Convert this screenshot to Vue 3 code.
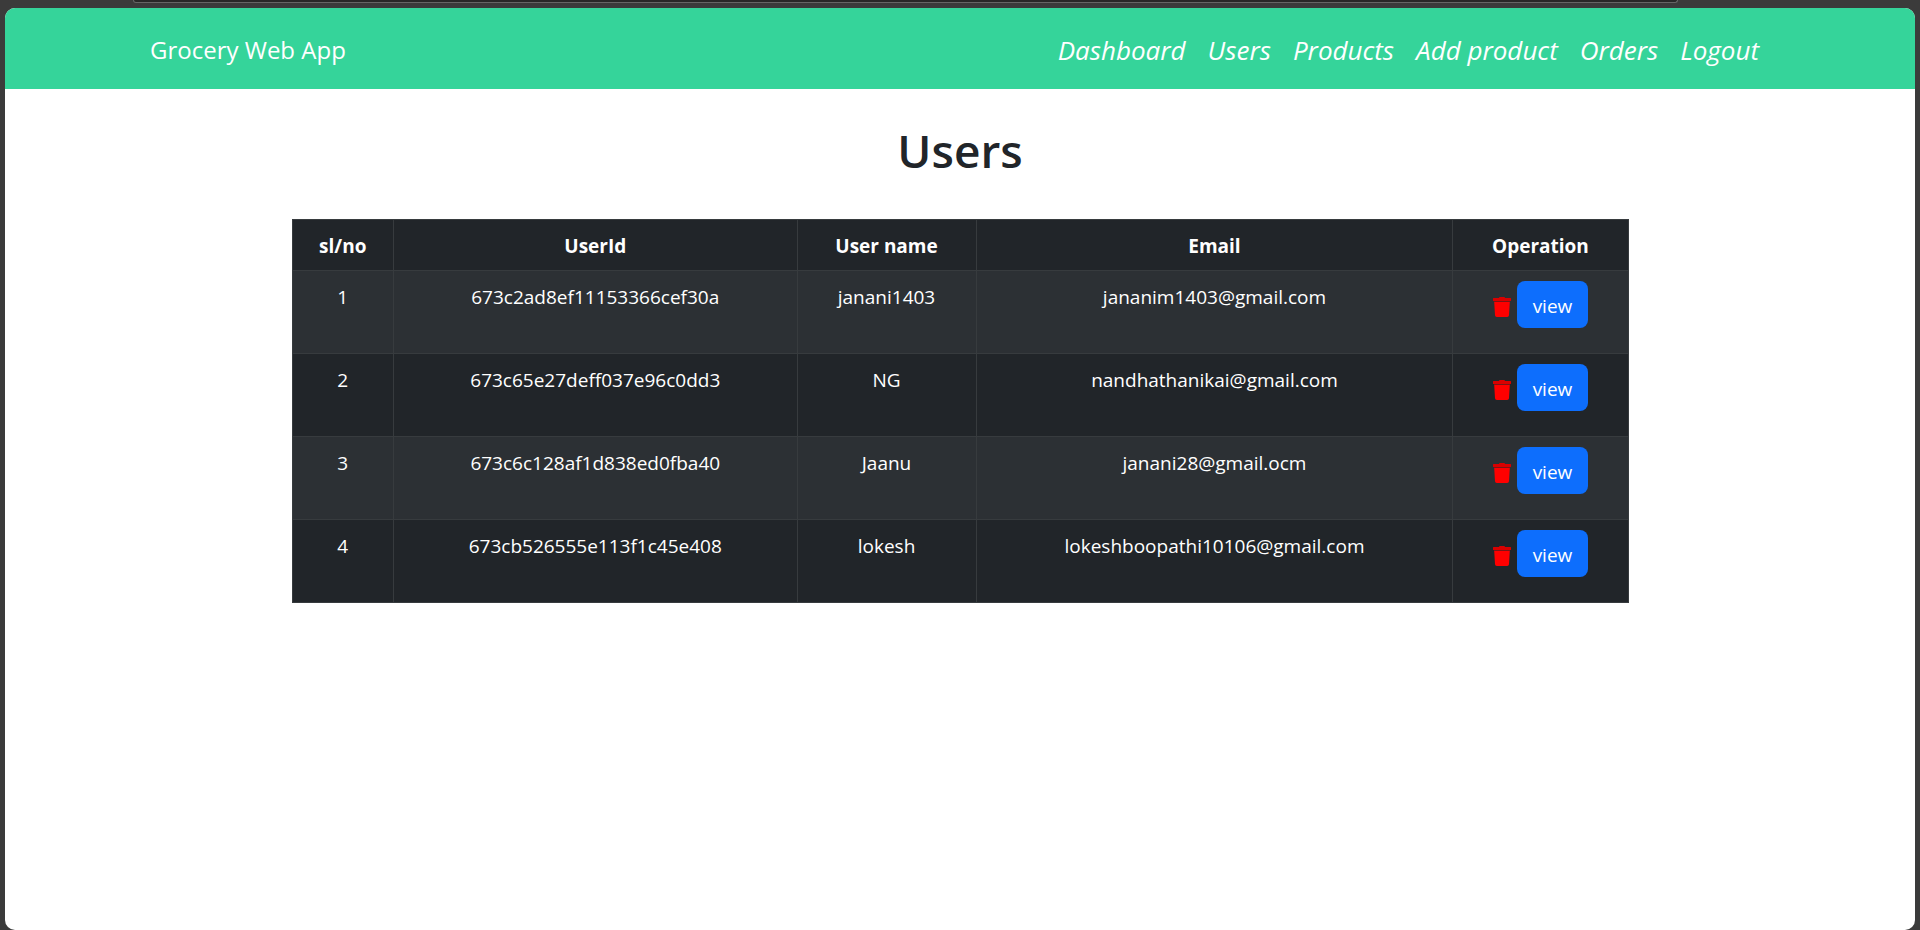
<script setup>
const links = ['Dashboard', 'Users', 'Products', 'Add product', 'Orders', 'Logout']
const columns = ['sl/no', 'UserId', 'User name', 'Email', 'Operation']
const users = [
  { id: '673c2ad8ef11153366cef30a', name: 'janani1403', email: 'jananim1403@gmail.com' },
  { id: '673c65e27deff037e96c0dd3', name: 'NG', email: 'nandhathanikai@gmail.com' },
  { id: '673c6c128af1d838ed0fba40', name: 'Jaanu', email: 'janani28@gmail.ocm' },
  { id: '673cb526555e113f1c45e408', name: 'lokesh', email: 'lokeshboopathi10106@gmail.com' }
]
</script>

<template>
  <div class="window">
    <div class="toolbar"><div class="address"></div></div>
    <div class="page">
      <header class="navbar">
        <div class="container">
          <a class="brand" href="#">Grocery Web App</a>
          <nav class="nav">
            <a v-for="link in links" :key="link" class="nav-link" href="#">{{ link }}</a>
          </nav>
        </div>
      </header>
      <main>
        <h1>Users</h1>
        <table>
          <colgroup>
            <col class="c-no" />
            <col class="c-id" />
            <col class="c-name" />
            <col class="c-email" />
            <col class="c-op" />
          </colgroup>
          <thead>
            <tr>
              <th v-for="c in columns" :key="c" scope="col">{{ c }}</th>
            </tr>
          </thead>
          <tbody>
            <tr v-for="(u, i) in users" :key="u.id">
              <td>{{ i + 1 }}</td>
              <td>{{ u.id }}</td>
              <td>{{ u.name }}</td>
              <td>{{ u.email }}</td>
              <td>
                <div class="ops">
                  <button class="trash" type="button" :aria-label="'Delete ' + u.name">
                    <svg viewBox="0 0 18 20" width="18" height="20" aria-hidden="true">
                      <path fill="#d90000" d="M6.500 0h5l.5 1h5.500a.5.500 0 0 1 .5.500V3.500a.5.500 0 0 1-.5.500H.5A.5.500 0 0 1 0 3.500V1.500A.5.500 0 0 1 .5 1H6z" />
                      <path fill="#f00" d="M1.200 5h15.600l-.8 13.200a1.900 1.900 0 0 1-1.900 1.800H3.900A1.900 1.900 0 0 1 2 18.200z" />
                      <path fill="#7a1416" d="M1 4h16v1H1z" />
                    </svg>
                  </button>
                  <button class="view" type="button">view</button>
                </div>
              </td>
            </tr>
          </tbody>
        </table>
      </main>
    </div>
  </div>
</template>

<style>
body {
  background: #3b3b3b;
}
</style>

<style scoped>
* {
  box-sizing: border-box;
}
.window {
  min-height: 100vh;
  display: flex;
  flex-direction: column;
  padding: 0 5px;
  background: #3b3b3b;
  color: #212529;
  font-family: "Segoe UI", "Open Sans", "Noto Sans", sans-serif;
  font-size: 19px;
  line-height: 32px;
}
.toolbar {
  height: 8px;
  padding: 0 12.4% 0 6.7%;
}
.address {
  height: 3px;
  border: 1px solid #666;
  border-top: 0;
  border-radius: 0 0 12px 12px;
  background: #282828;
}
.page {
  flex: 1;
  border-radius: 10px;
  overflow: hidden;
  background: #fff;
}
.navbar {
  background: #35d49a;
}
.container {
  max-width: 1650px;
  min-height: 81px;
  margin: 0 auto;
  padding: 12px 15px 10px;
  display: flex;
  align-items: center;
  justify-content: space-between;
}
.brand {
  color: #fff;
  font-size: 24px;
  line-height: 38px;
  text-decoration: none;
}
.nav {
  display: flex;
}
.nav-link {
  padding: 9px 11px;
  color: #fff;
  font-size: 26px;
  font-style: italic;
  line-height: 40px;
  text-decoration: none;
}
h1 {
  margin: 31px 0 39px;
  font-size: 46px;
  font-weight: 600;
  line-height: 60px;
  text-align: center;
}
table {
  width: 70%;
  margin: 0 auto;
  border-collapse: collapse;
  table-layout: fixed;
  background: #212529;
  color: #fff;
  text-align: center;
}
.c-no { width: 7.6%; }
.c-id { width: 30.2%; }
.c-name { width: 13.4%; }
.c-email { width: 35.7%; }
.c-op { width: 13.1%; }
th,
td {
  padding: 10px 10px 8px;
  border: 1px solid #373b3e;
  vertical-align: top;
}
td {
  height: 83px;
}
tbody tr:nth-child(odd) {
  background: #2c3034;
}
.ops {
  display: flex;
  justify-content: center;
  align-items: center;
  gap: 6px;
}
.trash {
  display: flex;
  padding: 4px 0 0;
  border: 0;
  background: none;
}
.view {
  height: 47px;
  padding: 2px 16px 0;
  border: 0;
  border-radius: 8px;
  background: #0d6efd;
  color: #fff;
  font: inherit;
}
</style>
